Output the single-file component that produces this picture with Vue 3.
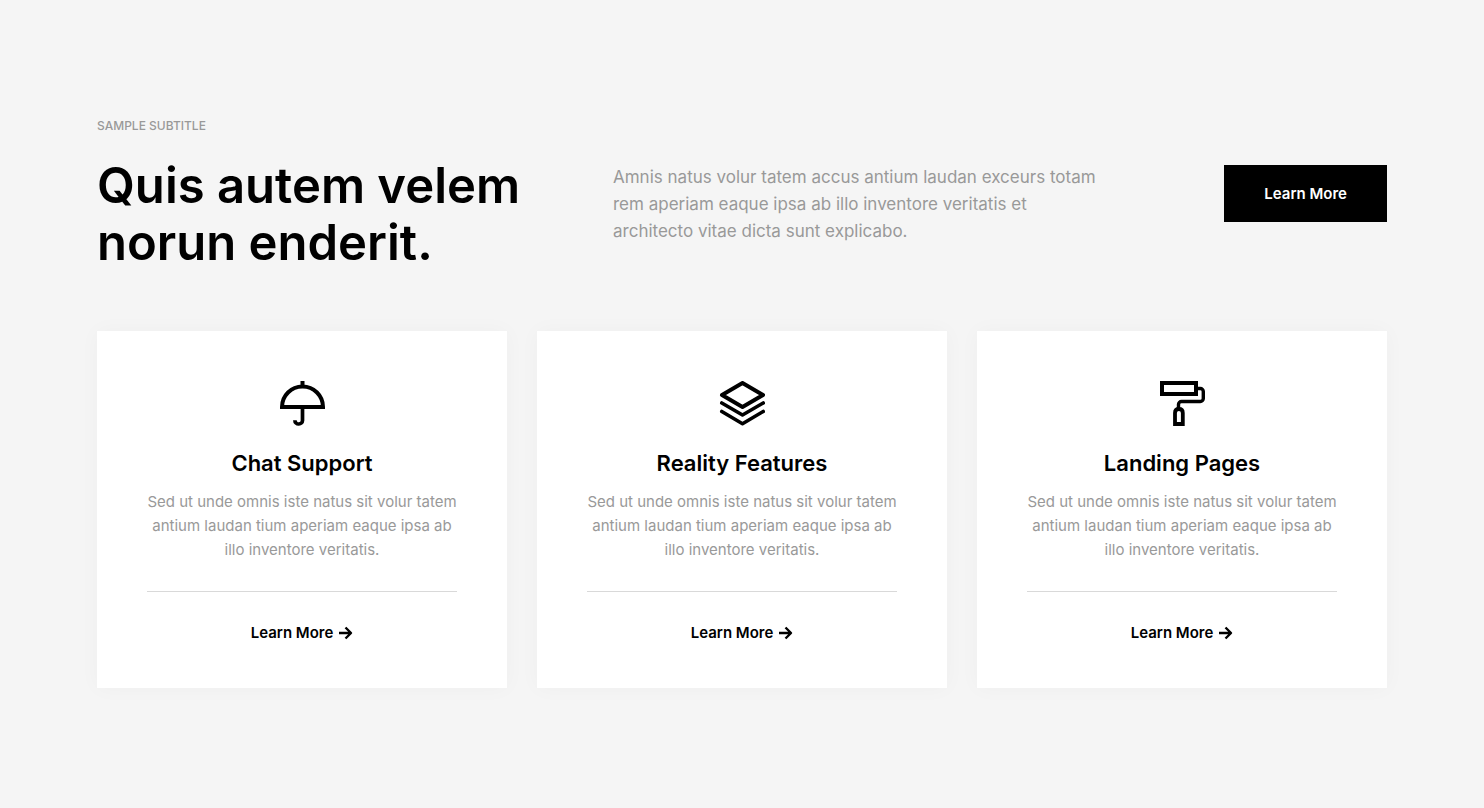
<script setup>
const cards = [
  { title: 'Chat Support', icon: 'umbrella' },
  { title: 'Reality Features', icon: 'layers' },
  { title: 'Landing Pages', icon: 'roller' },
]
</script>

<template>
  <section class="section">
    <p class="subtitle">SAMPLE SUBTITLE</p>
    <header class="intro">
      <h2>Quis autem velem<br />norun enderit.</h2>
      <p class="lead">Amnis natus volur tatem accus antium laudan exceurs totam<br />rem aperiam eaque ipsa ab illo inventore veritatis et<br />architecto vitae dicta sunt explicabo.</p>
      <button type="button">Learn More</button>
    </header>
    <div class="cards">
      <article v-for="card in cards" :key="card.title" class="card">
        <svg class="icon" viewBox="0 0 46 46" fill="none" stroke="currentColor" stroke-width="4" aria-hidden="true">
          <template v-if="card.icon === 'umbrella'">
            <path d="M23.500 0v5M3 26a20.500 20.500 0 0 1 41 0z" />
            <path d="M23.500 26v13.500a3.600 3.600 0 0 1-3.700 3.500a3.700 3.700 0 0 1-3.900-3.800" stroke-width="3.700" />
          </template>
          <g v-else-if="card.icon === 'layers'" stroke-linejoin="round" stroke-linecap="round">
            <path d="M23.500 2L44 14L23.500 26L3 14Z" />
            <path d="M2.800 22L23.500 34L44.200 22M2.800 30.500L23.500 42.700L44.200 30.500" stroke-width="3.600" />
          </g>
          <template v-else>
            <path d="M3 2h34v11H3z" />
            <path d="M38 7.500h3.300a3 3 0 0 1 3 3v7a3 3 0 0 1-3 3H22.500a3 3 0 0 0-3 3v4" stroke-width="3.400" />
            <path d="M16 43V32q0-4 3.900-4t3.900 4v11z" stroke-width="3.800" />
          </template>
        </svg>
        <h3>{{ card.title }}</h3>
        <p class="text">Sed ut unde omnis iste natus sit volur tatem<br />antium laudan tium aperiam eaque ipsa ab<br />illo inventore veritatis.</p>
        <hr />
        <a href="#" class="more">Learn More
          <svg viewBox="0 0 14 14" fill="none" stroke="currentColor" stroke-width="2.400" stroke-linejoin="round" aria-hidden="true"><path d="M0 7h12M6.500 1.500L12 7l-5.500 5.500" /></svg>
        </a>
      </article>
    </div>
  </section>
</template>

<style>
body { margin: 0; background: #f5f5f5; }
</style>
<style scoped>
.section { padding: 115px 97px 120px; font-family: Inter, sans-serif; color: #000; }
.subtitle { margin: 0; font-size: 12px; line-height: 22px; font-weight: 500; color: #999; }
.intro { display: grid; grid-template-columns: 2fr 2fr 1fr; margin-top: 20px; }
h2 { margin: 0; font-size: 49px; line-height: 57px; font-weight: 600; }
.lead { margin: 7px 0 0; font-size: 17px; line-height: 27px; color: #999; }
button { justify-self: end; align-self: start; margin-top: 8px; padding: 16px 40px; border: 0; background: #000; color: #fff; font: 600 15px/25px Inter, sans-serif; white-space: nowrap; }
.cards { display: grid; grid-template-columns: repeat(3, 1fr); gap: 30px; margin-top: 60px; }
.card { display: flex; flex-direction: column; align-items: center; padding: 50px 50px 43px; background: #fff; text-align: center; box-shadow: 0 0 20px rgba(0, 0, 0, 0.03); }
.icon { width: 46px; height: 46px; }
h3 { margin: 21px 0 0; font-size: 22px; line-height: 30px; font-weight: 600; }
.text { margin: 12px 0 0; font-size: 15px; line-height: 24px; color: #999; }
hr { width: 100%; height: 1px; margin: 29px 0; border: 0; background: #d9d9d9; }
.more { display: flex; gap: 6px; align-items: center; font-size: 15px; line-height: 24px; font-weight: 600; color: #000; text-decoration: none; }
.more svg { width: 14px; height: 14px; }
@media (max-width: 1100px) {
  .section { padding: 60px 30px; }
  .intro, .cards { grid-template-columns: 1fr; }
  button { justify-self: start; }
}
</style>
